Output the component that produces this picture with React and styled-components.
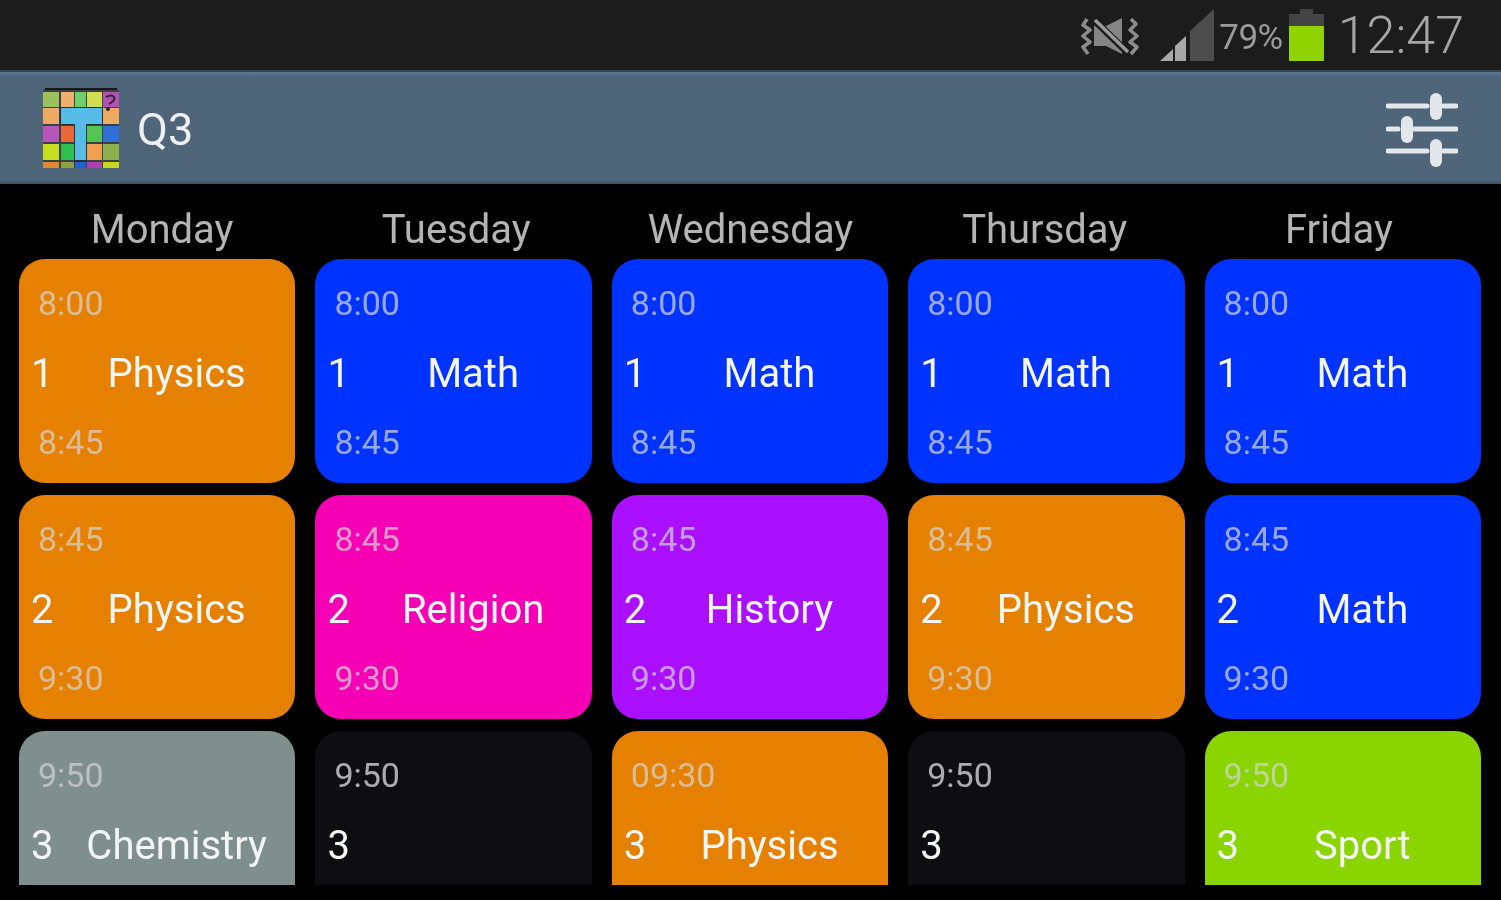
import styled, { createGlobalStyle } from "styled-components";

const GlobalStyle = createGlobalStyle`
  html, body { margin: 0; padding: 0; background: #000; }
  * { box-sizing: border-box; }
`;

const Screen = styled.div`
  width: 1501px;
  height: 900px;
  overflow: hidden;
  background: #000;
  display: flex;
  flex-direction: column;
  font-family: Roboto, "Liberation Sans", sans-serif;
  filter: blur(0.7px);
`;

const StatusBar = styled.div`
  height: 70px;
  flex: none;
  background: #1c1c1c;
  display: flex;
  align-items: center;
  justify-content: flex-end;
  padding-right: 37px;
`;

const Battery = styled.svg`
  display: block;
  margin: 0 14px 0 6px;
`;

const SignalIcon = styled.svg`
  display: block;
  margin-left: 19px;
`;

const Percent = styled.span`
  font-size: 35px;
  color: #9a9a9a;
  letter-spacing: -0.5px;
  margin-left: 5px;
  padding-top: 4px;
`;

const Clock = styled.span`
  font-size: 52px;
  font-weight: 300;
  color: #a6a6a6;
`;

const AppBar = styled.div`
  height: 114px;
  flex: none;
  background: linear-gradient(#5b7a92 0, #4f6579 5px, #4f6579 108px, #33465a 114px);
  border-top: 2px solid #2f4658;
  display: flex;
  align-items: center;
  padding: 0 43px 0 42px;
`;

const Logo = styled.svg`
  display: block;
  flex: none;
`;

const AppTitle = styled.span`
  font-size: 45px;
  color: #eef0f2;
  margin-left: 17px;
  padding-top: 3px;
  flex: 1;
`;

const DayRow = styled.div`
  height: 75px;
  flex: none;
  display: grid;
  grid-template-columns: repeat(5, 1fr);
  padding: 0 15px 0 15px;
  align-items: center;
`;

const Day = styled.div`
  font-size: 40px;
  color: #b4b4b4;
  text-align: center;
  padding-top: 16px;
`;

const Timetable = styled.div`
  height: 626px;
  flex: none;
  overflow: hidden;
  display: grid;
  grid-template-columns: repeat(5, 1fr);
  grid-auto-rows: 224px;
  gap: 12px 20px;
  padding: 0 20px 0 19px;
`;

const Card = styled.div`
  background: ${(p) => p.$color};
  border-radius: 26px;
  display: flex;
  flex-direction: column;
  justify-content: space-between;
  padding: 24px 0 21px;
`;

const Time = styled.div`
  font-size: 34px;
  line-height: 40px;
  height: 40px;
  padding-left: 19px;
  color: ${(p) => (p.$empty ? "rgba(225,225,225,0.75)" : "rgba(212,212,212,0.72)")};
`;

const Lesson = styled.div`
  display: flex;
  align-items: center;
  color: #f4f6f6;
  font-size: 40px;
  line-height: 46px;
  padding-top: 2px;
`;

const Period = styled.span`
  width: 39px;
  flex: none;
  padding-left: 12px;
`;

const Subject = styled.span`
  flex: 1;
  text-align: center;
  white-space: nowrap;
`;

const ORANGE = "#e58000";
const BLUE = "#0033ff";
const PINK = "#f500b4";
const PURPLE = "#aa10ff";
const GRAY = "#7f908c";
const GREEN = "#8ad400";
const EMPTY = "#0e0e10";

const days = ["Monday", "Tuesday", "Wednesday", "Thursday", "Friday"];

// the last row runs past the bottom of the screen, so its end time never shows
const times = [
  ["8:00", "8:45"],
  ["8:45", "9:30"],
  ["9:50", ""],
];

const table = [
  [
    { name: "Physics", color: ORANGE },
    { name: "Math", color: BLUE },
    { name: "Math", color: BLUE },
    { name: "Math", color: BLUE },
    { name: "Math", color: BLUE },
  ],
  [
    { name: "Physics", color: ORANGE },
    { name: "Religion", color: PINK },
    { name: "History", color: PURPLE },
    { name: "Physics", color: ORANGE },
    { name: "Math", color: BLUE },
  ],
  [
    { name: "Chemistry", color: GRAY },
    { name: "", color: EMPTY },
    { name: "Physics", color: ORANGE, start: "09:30" },
    { name: "", color: EMPTY },
    { name: "Sport", color: GREEN },
  ],
];

const logoCols = [
  [0, 16],
  [18, 13],
  [32, 11],
  [44, 15],
  [60, 16],
];
const logoRows = [
  [4, 15],
  [20, 16],
  [38, 16],
  [56, 16],
  [74, 6],
];
const logoColors = [
  ["#9dc05f", "#eeb06c", "#6fcf6f", "#cfdf4f", "#b452b4"],
  ["#eeaa60", "#eeaa60", "#eeaa60", "#eeaa60", "#eeaa60"],
  ["#b855b8", "#e8683a", "#55bce8", "#55c455", "#2f6fd8"],
  ["#c8dc20", "#30c050", "#55bce8", "#eea050", "#8fb050"],
  ["#e08a30", "#8fa040", "#2060d0", "#b040b0", "#c8d820"],
];

const AppLogo = () => (
  <Logo width="78" height="80" viewBox="0 0 76 80">
    <rect x="0" y="2" width="76" height="78" fill="#3a4044" />
    <rect x="2" y="0" width="72" height="2" fill="#15191c" />
    {logoRows.map(([y, h], r) =>
      logoCols.map(([x, w], c) => (
        <rect key={`${r}-${c}`} x={x} y={y} width={w} height={h} fill={logoColors[r][c]} />
      ))
    )}
    <rect x="17" y="19" width="43" height="18" fill="#2a2f33" />
    <rect x="31" y="37" width="13" height="37" fill="#2a2f33" />
    <rect x="18" y="20" width="41" height="16" fill="#55bce8" />
    <rect x="32" y="36" width="11" height="36" fill="#55bce8" />
    <path d="M63 9q6-3 8 0t-5 7" fill="none" stroke="#2a2530" strokeWidth="2" />
    <circle cx="65" cy="21" r="2" fill="#2a2530" />
  </Logo>
);

const MuteIcon = () => (
  <svg width="60" height="40" viewBox="0 0 60 40" style={{ display: "block", marginTop: 4 }}>
    <g fill="none" stroke="#8c8c8c" strokeWidth="3.6" strokeLinejoin="round">
      <path d="M6 2l-4 6 7 5-7 6 7 6-7 5 5 7" />
      <path d="M50 2l5 5-6 6 7 6-7 6 7 5-6 7" />
    </g>
    <path d="M13 9h12l16-8v36L25 29H13z" fill="#858585" />
    <path d="M11 1l36 35" stroke="#1c1c1c" strokeWidth="7" />
    <path d="M14 3l33 32" stroke="#9a9a9a" strokeWidth="3.4" />
  </svg>
);

const Signal = () => (
  <SignalIcon width="54" height="52" viewBox="0 0 54 52">
    <path d="M0 52L13 40V52z" fill="#a8a8a8" />
    <path d="M15 52V37L26 27V52z" fill="#a8a8a8" />
    <path d="M30 52V22L54 0V52z" fill="#4d4d4d" />
  </SignalIcon>
);

const BatteryIcon = () => (
  <Battery width="35" height="52" viewBox="0 0 35 52">
    <rect x="11" y="0" width="13" height="5" fill="#444" />
    <rect x="0" y="5" width="35" height="13" fill="#444" />
    <rect x="0" y="17" width="35" height="35" fill="#8fd400" />
  </Battery>
);

const SlidersIcon = () => (
  <svg width="72" height="74" viewBox="0 0 72 74" style={{ display: "block", marginTop: 3 }}>
    <g stroke="#e4e7ea" strokeWidth="5" strokeLinecap="round">
      <path d="M2 13h39M57 13h13" />
      <path d="M2 36h10M28 36h42" />
      <path d="M2 58h39M57 58h13" />
    </g>
    <g fill="#e4e7ea">
      <rect x="44" y="0" width="12" height="27" rx="6" />
      <rect x="15" y="23" width="12" height="27" rx="6" />
      <rect x="44" y="46" width="12" height="28" rx="6" />
    </g>
  </svg>
);

export default function App() {
  return (
    <Screen>
      <GlobalStyle />
      <StatusBar>
        <MuteIcon />
        <Signal />
        <Percent>79%</Percent>
        <BatteryIcon />
        <Clock>12:47</Clock>
      </StatusBar>
      <AppBar>
        <AppLogo />
        <AppTitle>Q3</AppTitle>
        <SlidersIcon />
      </AppBar>
      <DayRow>
        {days.map((d) => (
          <Day key={d}>{d}</Day>
        ))}
      </DayRow>
      <Timetable>
        {table.map((row, r) =>
          row.map((lesson, c) => (
            <Card key={`${r}-${c}`} $color={lesson.color}>
              <Time $empty={!lesson.name}>{lesson.start || times[r][0]}</Time>
              <Lesson>
                <Period>{r + 1}</Period>
                <Subject>{lesson.name}</Subject>
              </Lesson>
              <Time $empty={!lesson.name}>{times[r][1]}</Time>
            </Card>
          ))
        )}
      </Timetable>
    </Screen>
  );
}
